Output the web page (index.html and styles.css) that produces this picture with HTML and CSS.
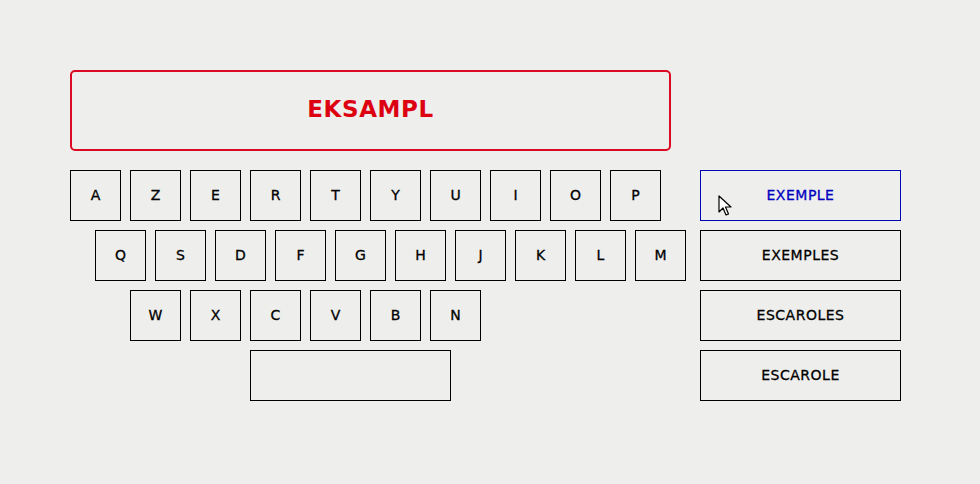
FILE: index.html
```html
<!DOCTYPE html>
<html>
<head>
<meta charset="utf-8">
<link rel="stylesheet" href="styles.css">
</head>
<body>
<div class="app">
  <div class="left">
    <div class="display">EKSAMPL</div>
    <div class="keyboard">
      <div class="row">
        <div class="key">A</div><div class="key">Z</div><div class="key">E</div><div class="key">R</div><div class="key">T</div><div class="key">Y</div><div class="key">U</div><div class="key">I</div><div class="key">O</div><div class="key">P</div>
      </div>
      <div class="row row2">
        <div class="key">Q</div><div class="key">S</div><div class="key">D</div><div class="key">F</div><div class="key">G</div><div class="key">H</div><div class="key">J</div><div class="key">K</div><div class="key">L</div><div class="key">M</div>
      </div>
      <div class="row row3">
        <div class="key">W</div><div class="key">X</div><div class="key">C</div><div class="key">V</div><div class="key">B</div><div class="key">N</div>
      </div>
      <div class="row row4">
        <div class="key space"></div>
      </div>
    </div>
  </div>
  <div class="suggestions">
    <div class="sugg active">EXEMPLE
      <svg class="cursor" width="14" height="22" viewBox="0 0 14 22"><path d="M1 1 L1 17 L5 13 L8 20 L10.5 19 L7.5 12 L13 12 Z" fill="#fff" stroke="#000" stroke-width="1.2" stroke-linejoin="round"/></svg>
    </div>
    <div class="sugg">EXEMPLES</div>
    <div class="sugg">ESCAROLES</div>
    <div class="sugg">ESCAROLE</div>
  </div>
</div>
</body>
</html>
```

FILE: styles.css
```css
html, body {
  margin: 0;
  padding: 0;
  background: #eeeeec;
  width: 980px;
  height: 484px;
  overflow: hidden;
  font-family: "DejaVu Sans", "Liberation Sans", sans-serif;
}
.app {
  display: flex;
  padding: 70px 0 0 70px;
  gap: 30px;
}
.left {
  width: 600px;
  flex-shrink: 0;
  display: flex;
  flex-direction: column;
  gap: 19px;
}
.display {
  box-sizing: border-box;
  width: 601px;
  height: 81px;
  border: 2px solid #dc0a22;
  border-radius: 5px;
  display: flex;
  align-items: center;
  justify-content: center;
  color: #dd0011;
  font-weight: bold;
  font-size: 23px;
  letter-spacing: 0.6px;
  padding-bottom: 3px;
}
.keyboard {
  display: flex;
  flex-direction: column;
  gap: 9px;
}
.row {
  display: flex;
  gap: 9px;
}
.row2 { padding-left: 25px; }
.row3 { padding-left: 60px; }
.row4 { padding-left: 180px; }
.key {
  box-sizing: border-box;
  flex-shrink: 0;
  width: 51px;
  height: 51px;
  border: 1px solid #000;
  display: flex;
  align-items: center;
  justify-content: center;
  font-size: 14px;
  color: #000;
  -webkit-text-stroke: 0.3px #000;
  padding-bottom: 2px;
}
.key.space { width: 201px; }
.suggestions {
  margin-top: 100px;
  display: flex;
  flex-direction: column;
  gap: 9px;
}
.sugg {
  position: relative;
  box-sizing: border-box;
  flex-shrink: 0;
  width: 201px;
  height: 51px;
  border: 1px solid #000;
  display: flex;
  align-items: center;
  justify-content: center;
  font-size: 14px;
  letter-spacing: 0.5px;
  color: #000;
  -webkit-text-stroke: 0.3px #000;
  padding-bottom: 2px;
}
.sugg.active {
  border-color: #0000b0;
  color: #0000c0;
  -webkit-text-stroke: 0.3px #0000c0;
}
.cursor {
  position: absolute;
  left: 17px;
  top: 24px;
}
```
